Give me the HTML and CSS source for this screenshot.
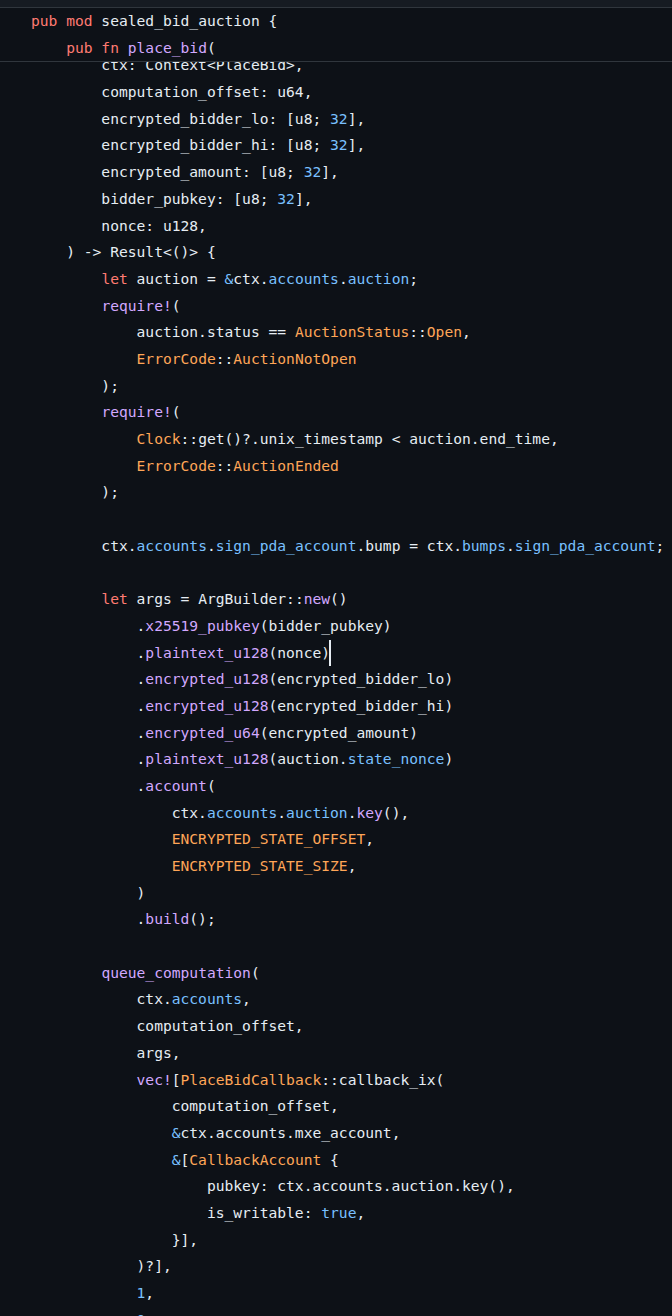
FILE: index.html
```html
<!DOCTYPE html>
<html lang="en">
<head>
<meta charset="utf-8">
<title>sealed_bid_auction</title>
<link rel="stylesheet" href="styles.css">
</head>
<body>
<div class="topbar"></div>
<div class="editor">
  <div class="sticky">
    <div class="line"><span class="k">pub mod</span> sealed_bid_auction {</div>
    <div class="line">    <span class="k">pub fn</span> <span class="f">place_bid</span>(</div>
  </div>
  <div class="code">
    <div class="line">        ctx: Context&lt;PlaceBid&gt;,</div>
    <div class="line">        computation_offset: u64,</div>
    <div class="line">        encrypted_bidder_lo: [u8; <span class="n">32</span>],</div>
    <div class="line">        encrypted_bidder_hi: [u8; <span class="n">32</span>],</div>
    <div class="line">        encrypted_amount: [u8; <span class="n">32</span>],</div>
    <div class="line">        bidder_pubkey: [u8; <span class="n">32</span>],</div>
    <div class="line">        nonce: u128,</div>
    <div class="line">    ) -&gt; Result&lt;()&gt; {</div>
    <div class="line">        <span class="k">let</span> auction = <span class="n">&amp;</span>ctx.<span class="p">accounts</span>.<span class="p">auction</span>;</div>
    <div class="line">        <span class="f">require!</span>(</div>
    <div class="line">            auction.status == <span class="t">AuctionStatus</span>::<span class="t">Open</span>,</div>
    <div class="line">            <span class="t">ErrorCode</span>::<span class="t">AuctionNotOpen</span></div>
    <div class="line">        );</div>
    <div class="line">        <span class="f">require!</span>(</div>
    <div class="line">            <span class="t">Clock</span>::get()?.unix_timestamp &lt; auction.end_time,</div>
    <div class="line">            <span class="t">ErrorCode</span>::<span class="t">AuctionEnded</span></div>
    <div class="line">        );</div>
    <div class="line"> </div>
    <div class="line">        ctx.<span class="p">accounts</span>.<span class="p">sign_pda_account</span>.bump = ctx.<span class="p">bumps</span>.<span class="p">sign_pda_account</span>;</div>
    <div class="line"> </div>
    <div class="line">        <span class="k">let</span> args = ArgBuilder::<span class="f">new</span>()</div>
    <div class="line">            .<span class="f">x25519_pubkey</span>(bidder_pubkey)</div>
    <div class="line">            .<span class="f">plaintext_u128</span>(nonce)<span class="cursor"></span></div>
    <div class="line">            .<span class="f">encrypted_u128</span>(encrypted_bidder_lo)</div>
    <div class="line">            .<span class="f">encrypted_u128</span>(encrypted_bidder_hi)</div>
    <div class="line">            .<span class="f">encrypted_u64</span>(encrypted_amount)</div>
    <div class="line">            .<span class="f">plaintext_u128</span>(auction.<span class="p">state_nonce</span>)</div>
    <div class="line">            .<span class="f">account</span>(</div>
    <div class="line">                ctx.<span class="p">accounts</span>.<span class="p">auction</span>.<span class="f">key</span>(),</div>
    <div class="line">                <span class="t">ENCRYPTED_STATE_OFFSET</span>,</div>
    <div class="line">                <span class="t">ENCRYPTED_STATE_SIZE</span>,</div>
    <div class="line">            )</div>
    <div class="line">            .<span class="f">build</span>();</div>
    <div class="line"> </div>
    <div class="line">        <span class="f">queue_computation</span>(</div>
    <div class="line">            ctx.<span class="p">accounts</span>,</div>
    <div class="line">            computation_offset,</div>
    <div class="line">            args,</div>
    <div class="line">            <span class="f">vec!</span>[<span class="t">PlaceBidCallback</span>::callback_ix(</div>
    <div class="line">                computation_offset,</div>
    <div class="line">                <span class="n">&amp;</span>ctx.accounts.mxe_account,</div>
    <div class="line">                <span class="n">&amp;</span>[<span class="t">CallbackAccount</span> {</div>
    <div class="line">                    pubkey: ctx.accounts.auction.key(),</div>
    <div class="line">                    is_writable: <span class="n">true</span>,</div>
    <div class="line">                }],</div>
    <div class="line">            )?],</div>
    <div class="line">            <span class="n">1</span>,</div>
    <div class="line">            <span class="n">0</span>,</div>
    <div class="line">        )?;</div>
  </div>
</div>
</body>
</html>
```

FILE: styles.css
```css
html, body {
  margin: 0;
  padding: 0;
  background: #0d1117;
}

body {
  width: 672px;
  height: 1316px;
  overflow: hidden;
  font-family: "DejaVu Sans Mono", "Liberation Mono", monospace;
  font-size: 14.62px;
  color: #e6edf3;
}

.topbar {
  height: 7px;
  background: #161b22;
  border-bottom: 1px solid #30363d;
}

.editor {
  position: relative;
  height: 1308px;
  overflow: hidden;
}

.sticky {
  position: absolute;
  top: 0;
  left: 0;
  right: 0;
  z-index: 2;
  padding-left: 31px;
  background: #0d1117;
  border-bottom: 1px solid #30363d;
}

.code {
  padding-top: 44.4px;
  padding-left: 31px;
}

.line {
  height: 26.7px;
  line-height: 26.7px;
  white-space: pre;
}

.k { color: #ff7b72; }
.f { color: #d2a8ff; }
.t { color: #ffa657; }
.p { color: #79c0ff; }
.n { color: #79c0ff; }

.cursor {
  display: inline-block;
  width: 2px;
  height: 26.7px;
  margin-left: -1px;
  margin-right: -1px;
  vertical-align: top;
  background: #e6edf3;
}
```
